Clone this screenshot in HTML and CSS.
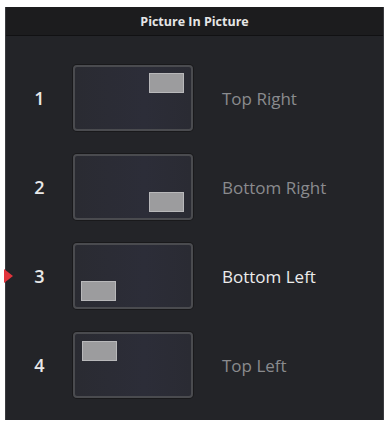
FILE: index.html
```html
<!DOCTYPE html>
<html>
<head>
<meta charset="utf-8">
<link rel="stylesheet" href="styles.css">
</head>
<body>
<div class="panel">
  <div class="header">Picture In Picture</div>
  <div class="list">
    <div class="row">
      <div class="num">1</div>
      <div class="screen"><div class="pip pip-tr"></div></div>
      <div class="label">Top Right</div>
    </div>
    <div class="row">
      <div class="num">2</div>
      <div class="screen"><div class="pip pip-br"></div></div>
      <div class="label">Bottom Right</div>
    </div>
    <div class="row selected">
      <div class="marker"></div>
      <div class="num">3</div>
      <div class="screen"><div class="pip pip-bl"></div></div>
      <div class="label">Bottom Left</div>
    </div>
    <div class="row">
      <div class="num">4</div>
      <div class="screen"><div class="pip pip-tl"></div></div>
      <div class="label">Top Left</div>
    </div>
  </div>
</div>
</body>
</html>
```
FILE: styles.css
```css
html, body {
  margin: 0;
  padding: 0;
  background: #ffffff;
}
body {
  font-family: "Open Sans", "DejaVu Sans", sans-serif;
}
.panel {
  margin: 7px 3px 0 5px;
  height: 413px;
  background: #232428;
  border-left: 1px solid #3a3b3f;
  border-right: 1px solid #3a3b3f;
  box-sizing: border-box;
}
.header {
  height: 29px;
  background: #1c1c1e;
  border-bottom: 1px solid #111113;
  box-sizing: border-box;
  color: #e6e6e6;
  font-size: 12.5px;
  font-weight: 700;
  text-align: center;
  line-height: 29px;
}
.list {
  display: flex;
  flex-direction: column;
  gap: 23px;
  padding-top: 29px;
}
.row {
  position: relative;
  display: flex;
  align-items: center;
  height: 66px;
}
.num {
  width: 67px;
  text-align: center;
  color: #e8e8e8;
  font-size: 18px;
  font-weight: 600;
}
.screen {
  position: relative;
  width: 120px;
  height: 66px;
  box-sizing: border-box;
  border: 2px solid #4a4b4f;
  border-radius: 4px;
  background: linear-gradient(90deg, #2a2b32 0%, #2c2d38 60%, #2a2b33 100%);
  box-shadow: 0 0 0 1px #19191b;
}
.pip {
  position: absolute;
  width: 35px;
  height: 20px;
  box-sizing: border-box;
  background: #9c9c9e;
  border: 1px solid #b8b8ba;
}
.pip-tr { top: 6px; right: 7px; }
.pip-br { bottom: 6px; right: 7px; }
.pip-bl { bottom: 6px; left: 6px; }
.pip-tl { top: 7px; left: 7px; }
.label {
  margin-left: 29px;
  color: #8a8b8e;
  font-size: 17px;
}
.selected .label {
  color: #ececec;
}
.marker {
  position: absolute;
  left: -2px;
  top: 26px;
  width: 0;
  height: 0;
  border-top: 7px solid transparent;
  border-bottom: 7px solid transparent;
  border-left: 9px solid #e2343c;
}
```
